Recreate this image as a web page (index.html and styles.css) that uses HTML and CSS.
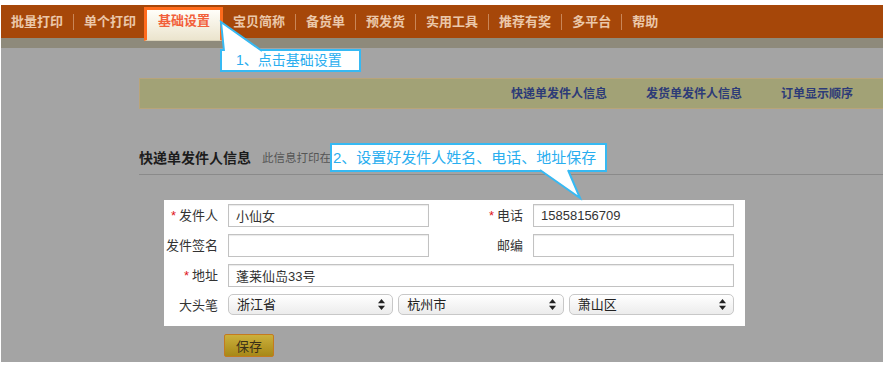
FILE: index.html
```html
<!DOCTYPE html>
<html lang="zh-CN">
<head>
<meta charset="utf-8">
<title>基础设置</title>
<link rel="stylesheet" href="styles.css">
</head>
<body>
<div class="frame">
  <nav class="nav">
    <a class="nav-item">批量打印</a><span class="sep"></span>
    <a class="nav-item">单个打印</a>
    <a class="nav-item active">基础设置</a>
    <a class="nav-item">宝贝简称</a><span class="sep"></span>
    <a class="nav-item">备货单</a><span class="sep"></span>
    <a class="nav-item">预发货</a><span class="sep"></span>
    <a class="nav-item">实用工具</a><span class="sep"></span>
    <a class="nav-item">推荐有奖</a><span class="sep"></span>
    <a class="nav-item">多平台</a><span class="sep"></span>
    <a class="nav-item">帮助</a>
  </nav>
  <div class="band"></div>
  <main class="content">
    <div class="subnav">
      <a>快递单发件人信息</a>
      <a>发货单发件人信息</a>
      <a>订单显示顺序</a>
    </div>
    <div class="section-head">
      <h2 class="section-title">快递单发件人信息</h2>
      <span class="hint">此信息打印在</span>
    </div>
    <form class="panel">
      <label class="lbl"><span class="star">*</span>发件人</label>
      <input class="field" type="text" value="小仙女">
      <label class="lbl"><span class="star">*</span>电话</label>
      <input class="field" type="text" value="15858156709">

      <label class="lbl">发件签名</label>
      <input class="field" type="text" value="">
      <label class="lbl">邮编</label>
      <input class="field" type="text" value="">

      <label class="lbl"><span class="star">*</span>地址</label>
      <input class="field wide" type="text" value="蓬莱仙岛33号">

      <label class="lbl">大头笔</label>
      <div class="selects wide">
        <div class="sel"><span>浙江省</span><svg class="arrows" width="7" height="11" viewBox="0 0 7 11"><polygon points="0,4.2 3.5,0 7,4.2" fill="#222"/><polygon points="0,6.8 3.5,11 7,6.8" fill="#222"/></svg></div>
        <div class="sel"><span>杭州市</span><svg class="arrows" width="7" height="11" viewBox="0 0 7 11"><polygon points="0,4.2 3.5,0 7,4.2" fill="#222"/><polygon points="0,6.8 3.5,11 7,6.8" fill="#222"/></svg></div>
        <div class="sel"><span>萧山区</span><svg class="arrows" width="7" height="11" viewBox="0 0 7 11"><polygon points="0,4.2 3.5,0 7,4.2" fill="#222"/><polygon points="0,6.8 3.5,11 7,6.8" fill="#222"/></svg></div>
      </div>
    </form>
    <button class="save" type="button">保存</button>
  </main>

  <div class="callout c1">1、点击基础设置</div>
  <div class="callout c2">2、设置好发件人姓名、电话、地址保存</div>
  <svg class="tails" width="882" height="357" viewBox="0 0 882 357">
    <polygon points="223,46.5 220,17 261,46.5" fill="#fff"/>
    <polyline points="223,46 220,17 261,46" fill="none" stroke="#36b9f3" stroke-width="2"/>
    <polygon points="539,164.5 579,193 567,164.5" fill="#fff"/>
    <polyline points="539,165 579,193 567,165" fill="none" stroke="#36b9f3" stroke-width="2"/>
  </svg>
</div>
</body>
</html>
```

FILE: styles.css
```css
* { box-sizing: border-box; }

body {
  margin: 0;
  background: #fff;
  font-family: "Liberation Sans", "Noto Sans CJK SC", sans-serif;
}

.frame {
  position: relative;
  margin: 5px 0 0 1px;
  width: 882px;
  height: 357px;
  background: #a4a4a4;
  overflow: hidden;
}

/* top nav */
.nav {
  display: flex;
  align-items: center;
  height: 33px;
  background: #a64709;
}

.nav-item {
  padding: 0 10px;
  font-size: 13px;
  line-height: 17px;
  font-weight: bold;
  color: #ebc7a9;
  white-space: nowrap;
}

.sep {
  width: 1px;
  height: 16px;
  background: #c98658;
}

.nav-item.active {
  position: relative;
  z-index: 2;
  align-self: flex-start;
  margin: 2px 0 0 -2px;
  height: 34px;
  padding: 2px 10px 0 11px;
  border: 3px solid #ff6b1c;
  border-bottom: 1px solid #d8d1b9;
  background: linear-gradient(#fffef9, #ebe4cd);
  color: #f2603a;
}

.band {
  height: 10px;
  background: #8e8a7b;
}

/* content */
.content {
  padding: 30px 0 0 138px;
}

.subnav {
  display: flex;
  justify-content: flex-end;
  align-items: center;
  gap: 39px;
  height: 31px;
  padding-right: 30px;
  background: #a2a276;
  border: 1px solid #b8a47a;
  border-right: none;
}

.subnav a {
  font-size: 12px;
  line-height: 16px;
  font-weight: bold;
  color: #2d3b78;
  white-space: nowrap;
}

.section-head {
  display: flex;
  align-items: flex-start;
  gap: 11px;
  margin-top: 40px;
  height: 26px;
  border-bottom: 1px solid #8a8a8a;
  white-space: nowrap;
}

.section-title {
  margin: 0;
  font-size: 14px;
  line-height: 18px;
  font-weight: bold;
  color: #1c1c1c;
}

.hint {
  font-size: 11.5px;
  line-height: 18px;
  color: #555;
}

/* form panel */
.panel {
  display: grid;
  grid-template-columns: 54px 201px 84px 201px;
  column-gap: 10px;
  row-gap: 7px;
  width: 581px;
  margin: 25px 0 0 25px;
  padding: 4px 11px 9px 0;
  background: #fff;
}

.lbl {
  font-size: 13px;
  line-height: 23px;
  color: #333;
  text-align: right;
  white-space: nowrap;
}

.star {
  margin-right: 3px;
  color: #e0161a;
  font-size: 13px;
}

.field {
  width: 100%;
  height: 23px;
  margin: 0;
  padding: 0 7px;
  border: 1px solid #c2c2c2;
  box-shadow: inset 0 1px 1px rgba(0, 0, 0, 0.09);
  background: #fff;
  font-family: "Liberation Sans", "Noto Sans CJK SC", sans-serif;
  font-size: 13px;
  color: #333;
  outline: none;
}

.wide {
  grid-column: 2 / span 3;
}

.selects {
  display: flex;
  gap: 5px;
}

.sel {
  flex: 1;
  display: flex;
  align-items: center;
  justify-content: space-between;
  height: 21px;
  padding: 0 7px 0 8px;
  border: 1px solid #c8c8c8;
  border-radius: 5px;
  background: linear-gradient(#ffffff, #ececec);
  font-size: 13px;
  line-height: 17px;
  color: #222;
}

.arrows { display: block; }

.save {
  display: block;
  width: 50px;
  height: 23px;
  margin: 8px 0 0 85px;
  padding: 0;
  border: 1px solid #c47a1f;
  border-radius: 2px;
  background: linear-gradient(#cbb03c, #a78817);
  font-family: "Liberation Sans", "Noto Sans CJK SC", sans-serif;
  font-size: 13px;
  color: #3a3018;
}

/* callouts */
.callout {
  position: absolute;
  z-index: 3;
  background: #fff;
  border: 2px solid #36b9f3;
  color: #2aaeef;
  white-space: nowrap;
}

.c1 {
  left: 219px;
  top: 44px;
  width: 141px;
  height: 23px;
  padding-left: 14px;
  font-size: 14px;
  line-height: 19px;
}

.c2 {
  left: 329px;
  top: 138px;
  width: 277px;
  height: 29px;
  padding-left: 1px;
  font-size: 15px;
  line-height: 25px;
}

.tails {
  position: absolute;
  left: 0;
  top: 0;
  z-index: 4;
  pointer-events: none;
}
```
